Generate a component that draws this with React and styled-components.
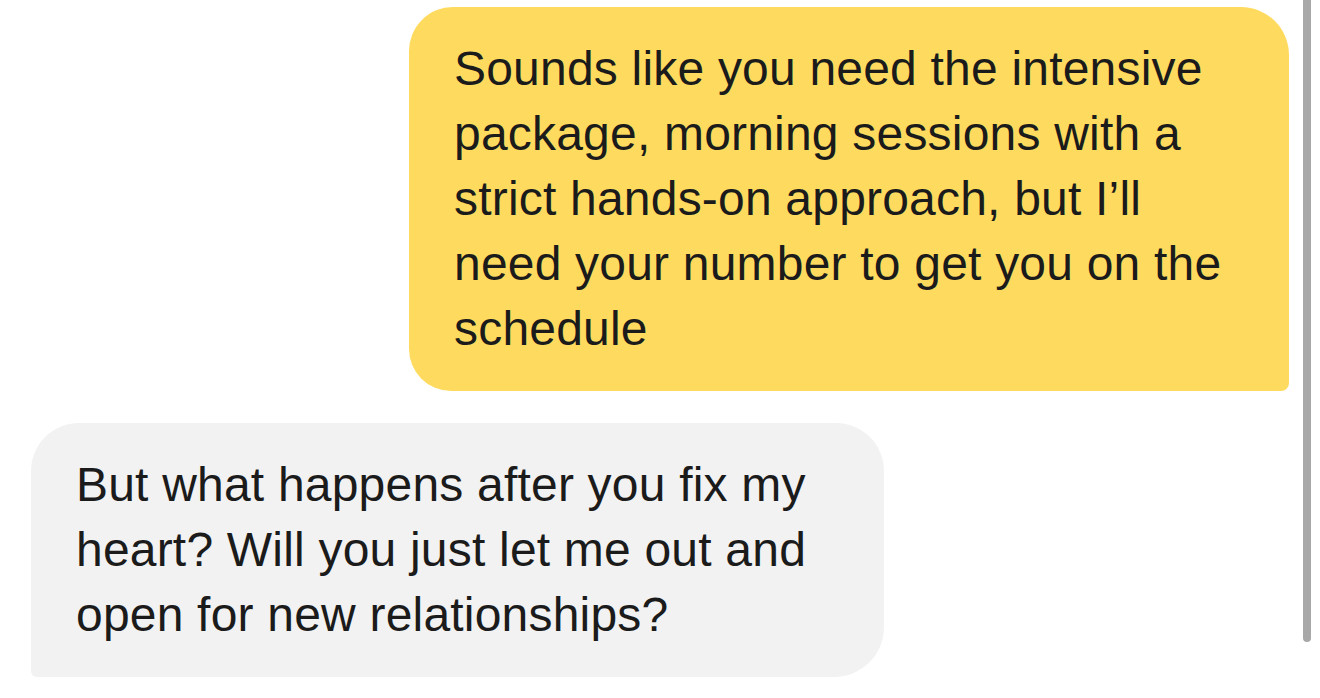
import React from 'react';
import styled, { createGlobalStyle } from 'styled-components';

const GlobalStyle = createGlobalStyle`
  html, body {
    margin: 0;
    padding: 0;
    background: #ffffff;
  }
  body {
    font-family: 'Liberation Sans', Arial, sans-serif;
    color: #1b1b1b;
    overflow: hidden;
  }
`;

const Thread = styled.div`
  display: flex;
  flex-direction: column;
  gap: 32px;
  padding: 7px 31px 0;
  position: relative;
  min-height: 698px;
  box-sizing: border-box;
`;

const Bubble = styled.div`
  box-sizing: border-box;
  width: ${(p) => p.width}px;
  align-self: ${(p) => (p.mine ? 'flex-end' : 'flex-start')};
  background: ${(p) => (p.mine ? '#fedb5f' : '#f2f2f2')};
  border-radius: ${(p) => (p.mine ? '44px 48px 8px 42px' : '48px 48px 50px 6px')};
  padding: 29px 40px 30px 45px;
  font-size: 48px;
  line-height: 65px;
  letter-spacing: 0.2px;
  white-space: pre-line;
`;

const Scrollbar = styled.div`
  position: absolute;
  top: 0;
  right: 9px;
  width: 8px;
  height: 642px;
  background: #a8a8a8;
  border-radius: 0 0 4px 4px;
`;

const messages = [
  {
    id: 1,
    mine: true,
    width: 880,
    text: 'Sounds like you need the intensive\npackage, morning sessions with a\nstrict hands-on approach, but I\u2019ll\nneed your number to get you on the\nschedule',
  },
  {
    id: 2,
    mine: false,
    width: 853,
    text: 'But what happens after you fix my\nheart? Will you just let me out and\nopen for new relationships?',
  },
];

export default function App() {
  return (
    <>
      <GlobalStyle />
      <Thread>
        {messages.map((m) => (
          <Bubble key={m.id} mine={m.mine} width={m.width}>
            {m.text}
          </Bubble>
        ))}
        <Scrollbar />
      </Thread>
    </>
  );
}
